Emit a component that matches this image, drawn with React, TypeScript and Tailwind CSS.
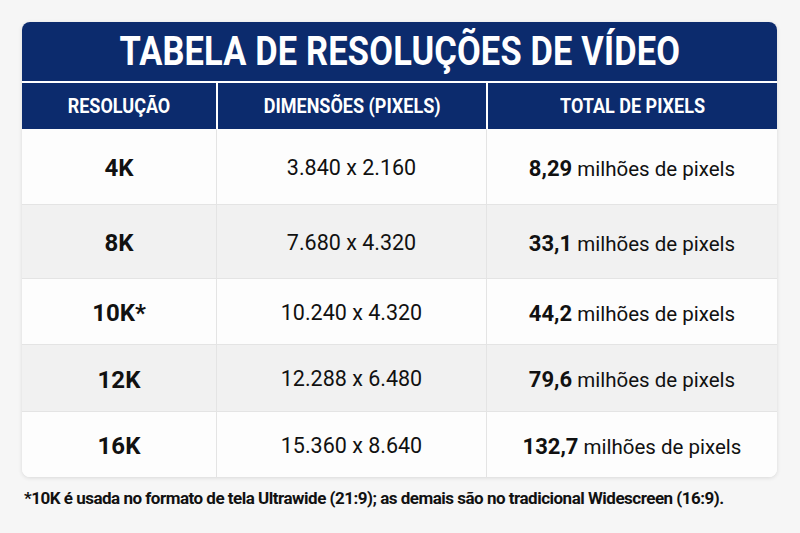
const rows = [
  { res: "4K", dim: "3.840 x 2.160", total: "8,29", h: "h-[75px]", alt: false },
  { res: "8K", dim: "7.680 x 4.320", total: "33,1", h: "h-[74px]", alt: true },
  { res: "10K*", dim: "10.240 x 4.320", total: "44,2", h: "h-[66px]", alt: false },
  { res: "12K", dim: "12.288 x 6.480", total: "79,6", h: "h-[67px]", alt: true },
  { res: "16K", dim: "15.360 x 8.640", total: "132,7", h: "h-[66px]", alt: false },
];

export default function App() {
  return (
    <div className="w-[800px] h-[533px] bg-[#f6f6f6] pt-[22px] pl-[22px] font-['Roboto',sans-serif] text-[#111]">
      <div className="w-[755px] rounded-lg overflow-hidden bg-white shadow-[0_1px_4px_rgba(0,0,0,0.12)]">
        {/* title */}
        <div className="h-[59px] bg-[#0c2b6d] flex items-center justify-center">
          <span className="inline-block text-[41px] font-bold leading-none text-white scale-x-[0.84] tracking-[0.2px]">
            TABELA DE RESOLUÇÕES DE VÍDEO
          </span>
        </div>

        {/* header row */}
        <div className="h-[48px] border-t-2 border-white bg-[#0c2b6d] grid grid-cols-[194px_270px_1fr] text-white">
          <HeaderCell>RESOLUÇÃO</HeaderCell>
          <HeaderCell border>DIMENSÕES (PIXELS)</HeaderCell>
          <HeaderCell border>TOTAL DE PIXELS</HeaderCell>
        </div>

        {/* body */}
        {rows.map((r, i) => (
          <div
            key={r.res}
            className={`${r.h} grid grid-cols-[194px_270px_1fr] ${i > 0 ? "border-t border-[#e4e4e4]" : ""} ${r.alt ? "bg-[#f1f1f1]" : "bg-[#fdfdfd]"}`}
          >
            <div className="flex items-center justify-center pt-[3px] text-[24px] font-bold">{r.res}</div>
            <div className="flex items-center justify-center pt-[3px] text-[21.5px] border-l border-[#e4e4e4]">{r.dim}</div>
            <div className="flex items-center justify-center pt-[3px] text-[20.5px] border-l border-[#e4e4e4]">
              <span>
                <b className="font-bold text-[22px]">{r.total}</b> milhões de pixels
              </span>
            </div>
          </div>
        ))}
      </div>

      <p className="mt-[13px] pl-[2px] text-[17px] font-bold leading-none tracking-[-0.5px] whitespace-nowrap">
        *10K é usada no formato de tela Ultrawide (21:9); as demais são no tradicional Widescreen (16:9).
      </p>
    </div>
  );
}

function HeaderCell({ children, border }: { children: React.ReactNode; border?: boolean }) {
  return (
    <div className={`flex items-center justify-center ${border ? "border-l-2 border-white" : ""}`}>
      <span className="inline-block text-[20px] font-bold leading-none scale-x-[0.9]">{children}</span>
    </div>
  );
}
